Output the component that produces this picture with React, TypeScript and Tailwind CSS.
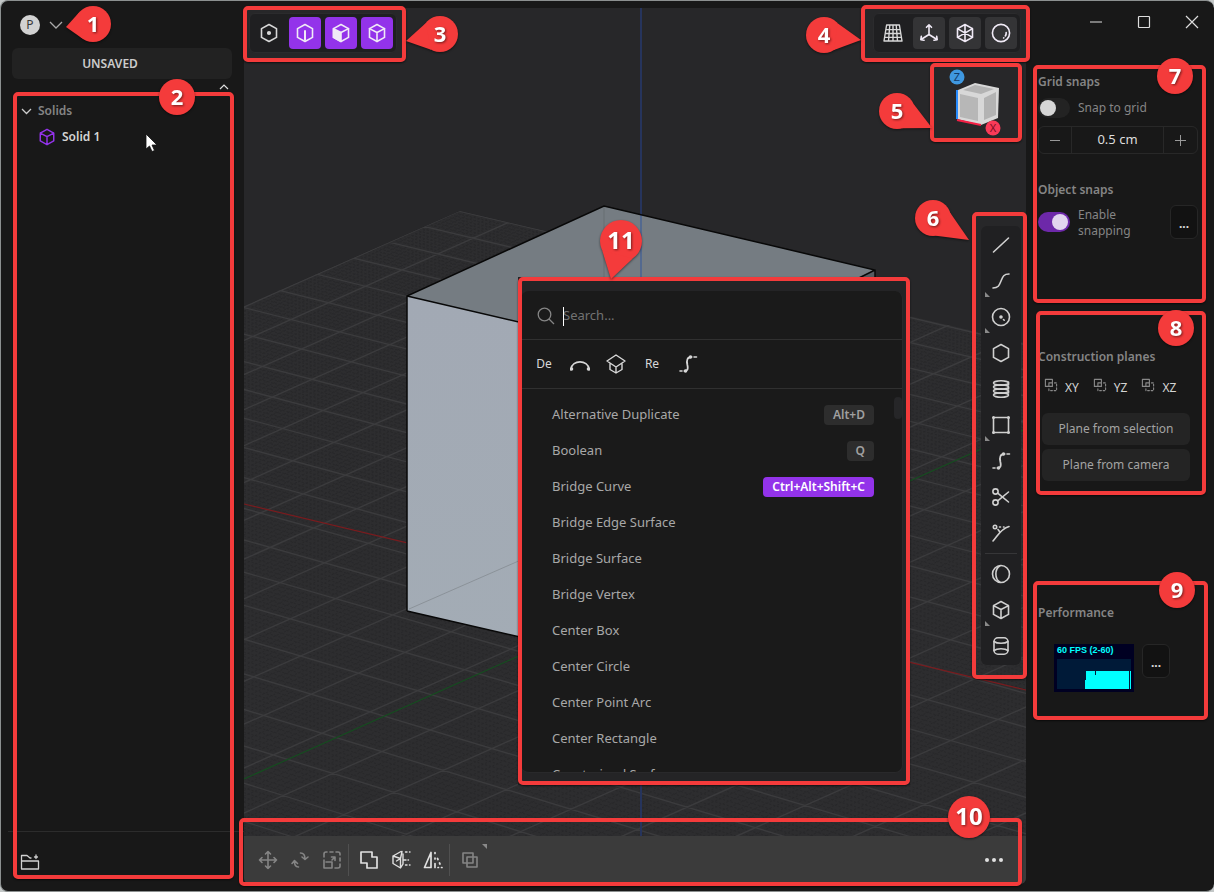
import React from "react";

type IconProps = { children: React.ReactNode; size?: number; className?: string };

function Icon({ children, size = 20, className = "" }: IconProps) {
  return (
    <svg
      width={size}
      height={size}
      viewBox="0 0 20 20"
      fill="none"
      stroke="currentColor"
      strokeWidth="1.6"
      strokeLinecap="round"
      strokeLinejoin="round"
      className={`shrink-0 ${className}`}
      aria-hidden="true"
    >
      {children}
    </svg>
  );
}

const HEX = "M10 1.5 17.5 5.6V14.4L10 18.5 2.5 14.4V5.6Z";
const CUBE_EDGES = "M2.5 5.6 10 9.5 17.5 5.6M10 9.5V18.5";

/* Annotation frame that surrounds the positioned parent. */
function Frame({ className }: { className: string }) {
  return (
    <div
      className={`pointer-events-none absolute z-20 rounded-[5px] border-4 border-[#f43b3b] shadow-[0_1px_2px_rgba(0,0,0,0.6)] ${className}`}
    />
  );
}

type BadgeProps = { n: number; r?: number; tip?: [number, number]; className: string };

function Badge({ n, r = 18, tip, className }: BadgeProps) {
  let tail = "";
  if (tip) {
    const a = Math.atan2(tip[1], tip[0]);
    const p = (t: number) => `${r * Math.cos(t)} ${r * Math.sin(t)}`;
    tail = `M${tip[0]} ${tip[1]}L${p(a - 0.85)}L${p(a + 0.85)}Z`;
  }
  return (
    <div
      className={`pointer-events-none absolute z-30 flex items-center justify-center pb-0.5 font-bold text-white ${
        r > 18 ? "size-[42px] text-2xl" : "size-9 text-[22px]"
      } ${className}`}
    >
      <svg
        viewBox={`${-r} ${-r} ${2 * r} ${2 * r}`}
        className="absolute inset-0 size-full overflow-visible drop-shadow-[0_1px_1px_rgba(0,0,0,0.5)]"
        fill="#f43b3b"
        aria-hidden="true"
      >
        <circle r={r} />
        {tail && <path d={tail} />}
      </svg>
      <span className="relative leading-none drop-shadow-[1px_1px_1px_rgba(0,0,0,0.5)]">{n}</span>
    </div>
  );
}

function Scene() {
  const major: string[] = [];
  const minor: string[] = [];
  const sub = 8;
  let y = 254;
  for (let i = 0; i < 27 * sub; i++) {
    const s = 0.236 + 0.00012 * (y - 254);
    const d = `M244 ${y - 397 * s}L1026 ${y + 385 * s}`;
    (i % sub === 0 ? major : minor).push(d);
    y += (24 + (y - 254) * 0.024) / sub;
  }
  y = 130;
  for (let i = 0; i < 27 * sub; i++) {
    const d = `M244 ${y + 397 * 0.446}L1026 ${y - 385 * 0.446}`;
    (i % sub === 0 ? major : minor).push(d);
    y += (33 + (y - 130) * 0.025) / sub;
  }
  return (
    <svg
      viewBox="244 8 782 876"
      preserveAspectRatio="xMidYMid slice"
      className="absolute inset-0 size-full"
      role="img"
      aria-label="3D viewport"
    >
      <defs>
        <clipPath id="floor">
          <path d="M460 211 1026 343V884H244V306Z" />
        </clipPath>
        <linearGradient id="side" x1="0" y1="0" x2="0" y2="1">
          <stop offset="0" stopColor="#a2a9b4" />
          <stop offset="1" stopColor="#a3acb5" />
        </linearGradient>
      </defs>
      <rect x="244" y="8" width="782" height="876" fill="#272729" />
      <g clipPath="url(#floor)">
        <rect x="244" y="200" width="782" height="684" fill="#2d2d2f" />
        <path d={minor.join("")} stroke="#252527" strokeWidth="1" strokeDasharray="2 2" opacity="0.6" />
        <path d={major.join("")} stroke="#3b3b3d" strokeWidth="1.4" />
      </g>
      <path d="M244 504 1026 690" stroke="#7a1b1e" strokeWidth="1.2" />
      <path d="M244 779 1026 429" stroke="#164d20" strokeWidth="1.2" />
      <path d="M641 8V884" stroke="#26345c" strokeWidth="2" />
      <path d="M604 206 875 270 690 362 407 296Z" fill="#757c82" />
      <path d="M407 296 690 362V676L407 611Z" fill="url(#side)" />
      <path d="M690 362 875 270V590L690 676Z" fill="#555b61" />
      <path d="M604 206V290" stroke="#686f72" />
      <path d="M641 215V300" stroke="#53698f" strokeWidth="2" />
      <path d="M409 609 530 556" stroke="#8b9299" />
      <path
        d="M407 611V296L604 206 875 270V590M407 296 690 362 875 270M407 611 690 676"
        stroke="#080808"
        strokeWidth="1.5"
        fill="none"
      />
    </svg>
  );
}

const selectionModes = [
  { label: "Points", on: false, art: <circle cx="10" cy="10" r="1.3" fill="currentColor" /> },
  { label: "Edges", on: true, art: <path d="M10 8V17" strokeWidth="2" /> },
  {
    label: "Faces",
    on: true,
    art: (
      <>
        <path d="M2.5 5.6 10 9.5V18.5L2.5 14.4Z" fill="currentColor" />
        <path d="M10 9.5 17.5 5.6" />
      </>
    ),
  },
  { label: "Solids", on: true, art: <path d={CUBE_EDGES} /> },
];

const viewModes = [
  {
    label: "Grid",
    on: false,
    art: (
      <path
        d="M3.6 2H16.4L19 18H1ZM2.8 6.6H17.2M2.2 10.5H17.8M1.6 14.4H18.4M6.8 2 5.5 18M10 2V18M13.2 2 14.5 18"
        strokeWidth="1.4"
      />
    ),
  },
  {
    label: "Axes",
    on: true,
    art: (
      <path d="M10 11.5V2M7.5 4.3 10 1.8 12.5 4.3M10 11.5 2 16.5M2.3 13.4 1.8 16.7 5 17.3M10 11.5 18 16.5M17.7 13.4 18.2 16.7 15 17.3" />
    ),
  },
  { label: "Wireframe", on: true, art: <path d={`${HEX}M10 1.5V18.5M2.5 5.6 17.5 14.4M17.5 5.6 2.5 14.4`} /> },
  {
    label: "Shading",
    on: true,
    art: (
      <>
        <circle cx="10" cy="10" r="8.6" />
        <path d="M15.2 9.5A5.5 5.5 0 0 1 14.3 13M12.6 15 12.8 14.8" />
      </>
    ),
  },
];

const curvePath = (
  <>
    <path d="M6.5 17C10.5 17 10 13.5 9.300 10.500 8.500 6.500 9 3 13.500 3" strokeWidth="1.8" />
    <path d="M2 17H4M16 3H18.500" />
    <circle cx="7.5" cy="17" r="1" fill="currentColor" />
    <circle cx="12.5" cy="3" r="1" fill="currentColor" />
  </>
);

const tools: { label: string; art: React.ReactNode; more?: boolean }[] = [
  { label: "Line", art: <path d="M2.5 17 17.5 3" /> },
  { label: "Curve", more: true, art: <path d="M2 17C8 17 8.5 13.5 10 10 11.5 6.5 12 3 18 3" /> },
  {
    label: "Circle",
    more: true,
    art: (
      <>
        <circle cx="10" cy="10" r="8.5" />
        <circle cx="10" cy="10" r="1" fill="currentColor" />
        <path d="M12.5 12.5 14.5 14.5" strokeDasharray="1 2" />
      </>
    ),
  },
  { label: "Polygon", art: <path d={HEX} /> },
  {
    label: "Spiral",
    art: (
      <>
        {[4, 8, 12, 16].map((cy) => (
          <ellipse key={cy} cx="10" cy={cy} rx="7.5" ry="2.3" />
        ))}
        <path d="M17.500 3V6M17.500 8V10M17.500 12V14" />
      </>
    ),
  },
  {
    label: "Rectangle",
    more: true,
    art: (
      <>
        <path d="M2.5 2.5H17.5V17.5H2.5Z" />
        <path d="M2.5 2.5V2.5M17.5 2.5V2.5M2.5 17.5V17.5M17.5 17.5V17.5" strokeWidth="3" />
      </>
    ),
  },
  { label: "Bridge", art: curvePath },
  {
    label: "Trim",
    art: (
      <>
        <circle cx="4.5" cy="4.5" r="2.6" />
        <circle cx="4.5" cy="15.5" r="2.6" />
        <path d="M6.7 6.2 17.5 15M6.7 13.8 17.5 5" />
      </>
    ),
  },
  {
    label: "Extend",
    art: (
      <>
        <circle cx="4" cy="4" r="1.7" />
        <path d="M2 18C7 12.500 9.500 6 18 3.500M8.500 4H9.500M12.500 4H13M7 6.500 8.500 8.500" />
      </>
    ),
  },
];

const solidTools: typeof tools = [
  {
    label: "Sphere",
    art: (
      <>
        <circle cx="10" cy="10" r="8.5" />
        <path d="M9 1.7C3.5 5 3.5 15 9 18.3" />
      </>
    ),
  },
  { label: "Box", more: true, art: <path d={HEX + CUBE_EDGES} /> },
  {
    label: "Cylinder",
    art: (
      <>
        <rect x="3" y="1.8" width="14" height="16.4" rx="4" />
        <path d="M3 5.5C6 7.8 14 7.8 17 5.5M3 14.5C6 12.2 14 12.2 17 14.5" />
      </>
    ),
  },
];

function ToolButton({ label, art, more }: (typeof tools)[number]) {
  return (
    <button aria-label={label} className="relative flex h-9 w-10 items-center justify-center text-[#d0d0d0]">
      <Icon>{art}</Icon>
      {more && (
        <svg viewBox="0 0 4 4" className="absolute bottom-0.5 left-1 size-[5px] fill-[#8a8a8a]" aria-hidden="true">
          <path d="M0 0V4H4Z" />
        </svg>
      )}
    </button>
  );
}

function ModeBar({ items, active }: { items: typeof viewModes; active: string }) {
  return (
    <div className="flex gap-1 rounded-md border border-[#2b2b2d] bg-[#1f1f21] p-[3px]">
      {items.map((m) => (
        <button
          key={m.label}
          aria-label={m.label}
          className={`flex size-8 items-center justify-center rounded ${m.on ? `${active} text-[#f0eaf6]` : "text-[#d8d8d8]"}`}
        >
          <Icon>
            {active.includes("9333ea") && <path d={HEX} />}
            {m.art}
          </Icon>
        </button>
      ))}
    </div>
  );
}

const commands: { name: string; keys?: string; hot?: boolean }[] = [
  { name: "Alternative Duplicate", keys: "Alt+D" },
  { name: "Boolean", keys: "Q" },
  { name: "Bridge Curve", keys: "Ctrl+Alt+Shift+C", hot: true },
  { name: "Bridge Edge Surface" },
  { name: "Bridge Surface" },
  { name: "Bridge Vertex" },
  { name: "Center Box" },
  { name: "Center Circle" },
  { name: "Center Point Arc" },
  { name: "Center Rectangle" },
  { name: "Constrained Surface" },
];

function CommandPalette() {
  return (
    <div className="absolute top-[269px] left-[274px] z-10 w-[392px] bg-[#242426] pt-[14px] pr-[7px] pb-3 pl-[3px]">
      <div className="rounded-lg border-r border-b border-[#29292b] bg-[#1a1a1a]">
        <label className="flex h-12 items-center gap-2 pt-0.5 pl-4">
          <svg width="18" height="18" viewBox="0 0 18 18" fill="none" stroke="#858585" strokeWidth="1.3" aria-hidden="true">
            <circle cx="7.5" cy="7.5" r="6.3" />
            <path d="M12 12 17 17" />
          </svg>
          <span className="sr-only">Search commands</span>
          <span className="relative flex flex-1 items-center">
            <span className="absolute left-0 h-[19px] w-px bg-white" />
            <input placeholder="Search..." className="w-full bg-transparent text-[13px] outline-none placeholder:text-[#727272]" />
          </span>
        </label>
        <div className="flex h-[50px] items-center border-y border-[#303030] pl-[5px] text-xs text-[#d8d8d8]">
          <button className="w-9">De</button>
          <button aria-label="Arc" className="flex w-9 justify-center">
            <Icon>
              <path d="M1 15C2 5.5 18 5.5 19 15" />
              <circle cx="1.5" cy="15" r="1" fill="currentColor" />
              <circle cx="18.5" cy="15" r="1" fill="currentColor" />
            </Icon>
          </button>
          <button aria-label="Offset face" className="flex w-9 justify-center">
            <Icon>
              <path d="M10 1 19 7 10 13 1 7ZM4 10V15.5L10 19 16 15.5V10M10 13V19" strokeWidth="1.4" />
            </Icon>
          </button>
          <button className="w-9">Re</button>
          <button aria-label="Bridge curve" className="flex w-9 justify-center">
            <Icon>{curvePath}</Icon>
          </button>
        </div>
        <div className="relative h-[383px] overflow-hidden py-2">
          <ul>
            {commands.map((c) => (
              <li key={c.name}>
                <button className="flex h-9 w-full items-center justify-between pr-7 pl-[31px] text-[13px] text-[#a8a8a8]">
                  {c.name}
                  {c.keys && (
                    <kbd
                      className={`flex h-5 items-center rounded px-[9px] font-['Noto_Sans',sans-serif] text-xs font-semibold ${
                        c.hot ? "bg-[#9333ea] text-white" : "bg-[#2d2d2d] text-[#a0a0a0]"
                      }`}
                    >
                      {c.keys}
                    </kbd>
                  )}
                </button>
              </li>
            ))}
          </ul>
          <span className="absolute top-2 right-0 h-[22px] w-2 rounded bg-[#262628]" />
        </div>
      </div>
      <Frame className="inset-0" />
      <Badge n={11} r={21} tip={[-10, 38]} className="-top-[57px] left-[82px]" />
    </div>
  );
}

function ViewCube() {
  return (
    <div className="absolute top-[55px] right-1 h-[79px] w-[92px]">
      <svg viewBox="930 63 92 79" className="size-full" role="img" aria-label="View orientation">
        <path d="M975 83 999 88 998 118 981 125 957 119 958 90Z" fill="#d8d8d8" />
        <path d="M975 85 994 89 981 94 963 90Z" fill="#b3b3b3" />
        <path d="M960 94 978 98V121L960 117Z" fill="#b7b7b7" />
        <path d="M984 98 996 92V115L984 120Z" fill="#b3b3b3" />
        <path d="M957 90V119" stroke="#288cff" strokeWidth="2" />
        <path d="M957 120 981 125" stroke="#f52045" strokeWidth="2" />
        <circle cx="957" cy="77" r="7.5" fill="#3f98e0" />
        <circle cx="993" cy="128" r="7.5" fill="#f93a58" />
        <text x="957" y="81" textAnchor="middle" fontSize="11" fontFamily="Noto Sans" fill="#123a68">Z</text>
        <text x="993" y="132" textAnchor="middle" fontSize="11" fontFamily="Noto Sans" fill="#7c0d22">X</text>
      </svg>
      <Frame className="inset-0" />
      <Badge n={5} tip={[35, 17]} className="top-[30px] -left-[51px]" />
    </div>
  );
}

function BottomBar() {
  const dim = "text-[#858585]";
  const lit = "text-[#e0e0e0]";
  const items = [
    {
      label: "Move",
      tone: dim,
      art: (
        <path d="M10 1.500V18.500M1.500 10H18.500M7.500 4 10 1.500 12.500 4M7.500 16 10 18.500 12.500 16M4 7.500 1.500 10 4 12.500M16 7.500 18.500 10 16 12.500" />
      ),
    },
    {
      label: "Rotate",
      tone: dim,
      art: <path d="M10.500 3C13.500 3 15 5 15 9M12 7 15 9.500 18 7M8.500 17C5.500 17 4.500 15 4.500 11.500M2 13.500 4.500 10.500 7.500 13.500" />,
    },
    {
      label: "Scale",
      tone: dim,
      art: <path d="M2 7V4Q2 2 4 2H5M8 2H11M14 2H16Q18 2 18 4V5M18 8V11M18 14V16Q18 18 16 18H13M2 10V18H10V12H4M10 10 13 7M9.500 7H13V10.500" />,
    },
    { label: "Union", tone: lit, art: <path d="M2 2H13V7H18V18H8V13H2Z" strokeWidth="1.7" /> },
    {
      label: "Cut",
      tone: lit,
      art: (
        <path
          d="M10 1.500 2 6V13.500L9.500 18V8.500L2 6M9.500 8.500 11 1.500M9.500 18 12 14V4M5.500 11 9.500 8.500M14.500 2H16M18.500 2H19M13 10H15M17 10H17.500M14.500 15H16M18.500 15H19"
          strokeWidth="1.4"
        />
      ),
    },
    {
      label: "Mirror",
      tone: lit,
      art: <path d="M8 2.500V17.500H1.500ZM12 2.500V3.500M12 8V9M12 13.500V17.500M14.500 8.500 15 9.500M16.500 13 17 14M15 17.500H15.500M18.500 17.500H19" strokeWidth="1.7" />,
    },
    { label: "Duplicate", tone: dim, art: <path d="M3 3H13V13H3ZM7 7H17V17H7Z" /> },
  ];
  const group = (from: number, to: number) =>
    items.slice(from, to).map((it) => (
      <button key={it.label} aria-label={it.label} className={`flex w-8 justify-center ${it.tone}`}>
        <Icon>{it.art}</Icon>
      </button>
    ));
  return (
    <div className="absolute inset-x-0 bottom-0 z-10 flex h-12 items-center rounded-b-md bg-[#3b3b3b] px-2">
      {group(0, 3)}
      <span className="mr-1 h-8 w-px bg-[#505050]" />
      {group(3, 6)}
      <span className="mr-1 h-8 w-px bg-[#505050]" />
      {group(6, 7)}
      <svg viewBox="0 0 4 4" className="-ml-1 mb-7 size-[5px] fill-[#8a8a8a]" aria-hidden="true">
        <path d="M0 0H4V4Z" />
      </svg>
      <button aria-label="More" className="mr-[15px] ml-auto flex gap-[3px] text-[#e0e0e0]">
        <i className="size-1 rounded-full bg-current" />
        <i className="size-1 rounded-full bg-current" />
        <i className="size-1 rounded-full bg-current" />
      </button>
      <Frame className="-top-[18px] right-1 -bottom-0.5 -left-[5px]" />
      <Badge n={10} r={21} className="-top-10 right-9" />
    </div>
  );
}

function Viewport() {
  return (
    <main className="relative my-[7px] flex-1 rounded-b-md">
      <div className="absolute inset-0 overflow-hidden rounded-b-md">
        <Scene />
      </div>
      <div className="absolute top-[5px] left-[5px] z-10">
        <ModeBar items={selectionModes} active="bg-[#9333ea]" />
        <Frame className="-top-[7px] -right-[9px] -bottom-[9px] -left-[6px]" />
        <Badge n={3} tip={[-34, 7]} className="top-[3px] -right-[61px]" />
      </div>
      <div className="absolute top-[5px] right-[5px] z-10">
        <ModeBar items={viewModes} active="bg-[#343436]" />
        <Frame className="-top-2 -right-[9px] -bottom-[9px] -left-3" />
        <Badge n={4} tip={[37, 5]} className="top-1 -left-[67px]" />
      </div>
      <ViewCube />
      <div className="absolute top-[218px] right-[5px] z-10">
        <div className="flex flex-col rounded-md bg-[#202022] py-px">
          {tools.map((t) => (
            <ToolButton key={t.label} {...t} />
          ))}
          <span className="mx-1 my-0.5 h-px bg-[#363638]" />
          {solidTools.map((t) => (
            <ToolButton key={t.label} {...t} />
          ))}
        </div>
        <Frame className="-top-[14px] -right-[6px] -bottom-[14px] -left-[9px]" />
        <Badge n={6} tip={[36, 22]} className="-top-[26px] -left-[66px]" />
      </div>
      <CommandPalette />
      <BottomBar />
    </main>
  );
}

function Sidebar() {
  return (
    <aside className="flex w-[243px] shrink-0 flex-col">
      <div className="relative flex h-[47px] items-center gap-2 pl-[19px]">
        <button className="flex size-5 items-center justify-center rounded-full bg-[#d2d2d2] text-xs text-[#3a3a3a]">P</button>
        <button aria-label="Main menu" className="text-[#aaa]">
          <svg width="16" height="16" viewBox="0 0 16 16" fill="none" stroke="currentColor" strokeWidth="1.3">
            <path d="M2 5 8 11 14 5" />
          </svg>
        </button>
        <Badge n={1} tip={[-27, 3]} className="top-[5px] left-[74px]" />
      </div>
      <button className="mr-3 ml-[11px] h-[31px] rounded-md bg-[#222] pr-6 text-xs font-semibold text-[#ccc]">UNSAVED</button>
      <button aria-label="Collapse" className="mr-3.5 flex h-[14px] items-center justify-center self-end pt-0.5 text-[#ddd]">
        <svg width="12" height="8" viewBox="0 0 12 8" fill="none" stroke="currentColor" strokeWidth="1.2">
          <path d="M2 6 6 2 10 6" />
        </svg>
      </button>
      <div className="relative mb-3 flex flex-1 flex-col text-xs">
        <button className="mt-[5px] flex h-[26px] items-center gap-1.5 pl-5 font-semibold text-[#858585]">
          <svg width="11" height="8" viewBox="0 0 11 8" fill="none" stroke="#ccc" strokeWidth="1.3">
            <path d="M1 2 5.500 6.500 10 2" />
          </svg>
          Solids
        </button>
        <button className="flex h-[26px] items-center gap-1.5 pl-[37px] font-semibold text-[#d5d5d5]">
          <Icon size={18} className="text-[#9333ea]">
            <path d={HEX + CUBE_EDGES} />
          </Icon>
          Solid 1
        </button>
        <svg width="14" height="20" viewBox="0 0 14 20" className="absolute top-10 left-36" aria-hidden="true">
          <path d="M1 1V16L4.500 13 7 18.500 9.500 17.500 7 12H12Z" fill="#fff" stroke="#111" strokeWidth=".8" />
        </svg>
        <div className="mt-auto ml-[7px] flex h-12 items-center border-t border-[#2c2c2c] pt-3 pl-3">
          <button aria-label="New group" className="text-[#d0d0d0]">
            <Icon>
              <path d="M1.500 17V3.500H7L10 6H11M1.500 17H18.500V9H1.500M16 3V6.500M14.500 5H17.500" strokeWidth="1.3" />
            </Icon>
          </button>
        </div>
        <Frame className="-top-px right-[10px] bottom-0 left-3" />
        <Badge n={2} className="-top-[14px] left-[158px]" />
      </div>
    </aside>
  );
}

function Toggle({ id, on }: { id: string; on?: boolean }) {
  return (
    <input
      id={id}
      type="checkbox"
      defaultChecked={on}
      className="h-5 w-8 shrink-0 appearance-none rounded-full bg-[#232323] p-0.5 before:block before:size-4 before:rounded-full before:bg-[#d6d6d6] checked:bg-[#6d28a9] checked:before:ml-3 checked:before:bg-[#e2d5ef]"
    />
  );
}

const dotsButton =
  "flex h-[34px] w-7 shrink-0 items-center justify-center rounded-md border border-[#262626] bg-[#121212] text-xs font-bold text-[#ddd]";
const heading = "text-xs leading-4 font-semibold text-[#858585]";

function Inspector() {
  return (
    <aside className="flex w-[188px] shrink-0 flex-col">
      <div className="flex h-[64px] items-start justify-end gap-8 pt-[13px] pr-3.5 text-[#ddd]">
        {[
          ["Minimize", "M2 8H14"],
          ["Maximize", "M3 2.500H13L13.500 3V13L13 13.500H3L2.500 13V3Z"],
          ["Close", "M2 2 14 14M14 2 2 14"],
        ].map(([label, d]) => (
          <button key={label} aria-label={label}>
            <svg width="16" height="16" viewBox="0 0 16 16" fill="none" stroke="currentColor" strokeWidth="1.2">
              <path d={d} />
            </svg>
          </button>
        ))}
      </div>

      <section className="relative mr-2 ml-[7px] h-[238px] pt-[9px] pr-2 pl-[5px]">
        <h2 className={heading}>Grid snaps</h2>
        <div className="mt-2 flex items-center gap-2">
          <Toggle id="grid-snap" />
          <label htmlFor="grid-snap" className="text-xs text-[#858585]">Snap to grid</label>
        </div>
        <div className="mt-2 flex h-7 divide-x divide-[#282828] rounded-md border border-[#282828] text-[#999]">
          <button aria-label="Decrease" className="flex w-[33px] shrink-0 items-center justify-center">
            <i className="h-px w-2.5 bg-current" />
          </button>
          <input aria-label="Grid size" defaultValue="0.5 cm" className="w-full min-w-0 bg-transparent text-center text-[13px] text-[#ddd]" />
          <button aria-label="Increase" className="relative flex w-[33px] shrink-0 items-center justify-center">
            <svg width="11" height="11" viewBox="0 0 11 11" stroke="currentColor" aria-hidden="true">
              <path d="M0 5.500H11M5.500 0V11" />
            </svg>
          </button>
        </div>
        <h2 className={`${heading} mt-7`}>Object snaps</h2>
        <div className="mt-[7px] flex items-center gap-2">
          <Toggle id="object-snap" on />
          <label htmlFor="object-snap" className="w-16 pt-0.5 text-xs leading-4 text-[#858585]">Enable snapping</label>
          <button aria-label="Snap options" className={`${dotsButton} ml-auto pt-1`}>...</button>
        </div>
        <Frame className="inset-0" />
        <Badge n={7} className="-top-[7px] left-[124px]" />
      </section>

      <section className="relative mt-2 mr-2 ml-[10px] h-[184px] pt-[38px] pr-4 pl-0.5">
        <h2 className={heading}>Construction planes</h2>
        <div className="mt-[13px] flex gap-[14px] pl-1.5 text-xs text-[#d5d5d5]">
          {["XY", "YZ", "XZ"].map((p) => (
            <button key={p} className="flex items-center gap-[7px] pt-0.5">
              <Icon size={14} className="-mt-1.5 text-[#888]">
                <path d="M2 2H12V12H2ZM7 12V7H12" />
                <path d="M15 7H18V18H7V15" strokeDasharray="2.500 2.500" />
              </Icon>
              {p}
            </button>
          ))}
        </div>
        <div className="mt-[17px] flex flex-col gap-1 pl-1 text-xs text-[#a3a3a3]">
          <button className="h-8 rounded-md bg-[#242424]">Plane from selection</button>
          <button className="h-8 rounded-md bg-[#242424]">Plane from camera</button>
        </div>
        <Frame className="inset-0" />
        <Badge n={8} className="-top-px left-[122px]" />
      </section>

      <section className="relative mt-[86px] mr-1.5 ml-[7px] h-[139px] pt-6 pl-[5px]">
        <h2 className={heading}>Performance</h2>
        <div className="mt-[23px] flex items-start gap-2 pl-4">
          <div className="h-12 w-20 bg-[#000022] px-[3px] font-['Liberation_Sans',sans-serif] text-[9px] leading-3 font-bold whitespace-nowrap text-[#00ffff]">
            60 FPS (2-60)
            <svg viewBox="0 0 74 30" className="mt-[3px] block w-full" role="img" aria-label="Frame rate graph">
              <path d="M0 0H74V30H0Z" fill="#001a38" />
              <path d="M28 30V21H29V12H38V16H39V12H72V30ZM73 12H74V30H73Z" fill="#0ff" />
            </svg>
          </div>
          <button aria-label="Performance options" className={`${dotsButton} pt-1`}>...</button>
        </div>
        <Frame className="inset-0" />
        <Badge n={9} className="-top-[9px] left-[126px]" />
      </section>
    </aside>
  );
}

export default function App() {
  return (
    <div className="min-h-screen bg-[#c4c8c8] font-['Noto_Sans',sans-serif]">
      <div className="flex min-h-screen overflow-hidden rounded-lg border-y border-l border-[#8c9090] bg-[#181818]">
        <Sidebar />
        <Viewport />
        <Inspector />
      </div>
    </div>
  );
}
